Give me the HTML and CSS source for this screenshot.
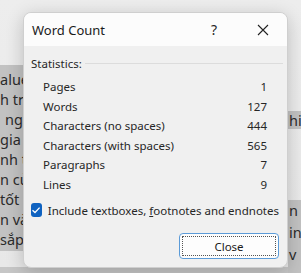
FILE: index.html
```html
<!DOCTYPE html>
<html lang="en">
<head>
  <meta charset="UTF-8" />
  <title>Word Count</title>
  <link rel="stylesheet" href="styles.css">
</head>
<body>
  <div class="doc">
    <div class="doc-left">
      <span class="ln">alue</span>
      <span class="ln">h tr</span>
      <span class="ln indent">ng</span>
      <span class="ln">gia</span>
      <span class="ln">nh t</span>
      <span class="ln">n củ</span>
      <span class="ln">tốt</span>
      <span class="ln">n và</span>
      <span class="ln">sắp</span>
    </div>
    <div class="doc-right">
      <span class="ln hi">hi</span>
      <span class="ln">n</span>
      <span class="ln">in</span>
      <span class="ln">v</span>
    </div>
  </div>

  <div class="dialog">
    <div class="titlebar">
      <span class="title">Word Count</span>
      <span class="help">?</span>
      <svg class="close-x" width="12" height="12" viewBox="0 0 12 12">
        <path d="M1 1 L11 11 M11 1 L1 11" stroke="#222" stroke-width="1.1" fill="none"/>
      </svg>
    </div>

    <div class="body">
      <div class="group">Statistics:</div>

      <div class="stats">
        <span>Pages</span><span class="num">1</span>
        <span>Words</span><span class="num">127</span>
        <span>Characters (no spaces)</span><span class="num">444</span>
        <span>Characters (with spaces)</span><span class="num">565</span>
        <span>Paragraphs</span><span class="num">7</span>
        <span>Lines</span><span class="num">9</span>
      </div>

      <label class="check">
        <span class="box">
          <svg width="10" height="10" viewBox="0 0 10 10">
            <path d="M1.5 5.2 L4 7.5 L8.6 2.6" stroke="#fff" stroke-width="1.3" fill="none"/>
          </svg>
        </span>
        <span>Include textboxes, <u>f</u>ootnotes and endnotes</span>
      </label>

      <div class="actions">
        <button class="close-btn"><span>Close</span></button>
      </div>
    </div>
  </div>
</body>
</html>
```

FILE: styles.css
```css
* {
  box-sizing: border-box;
}

body {
  margin: 0;
  width: 301px;
  height: 273px;
  overflow: hidden;
  position: relative;
  background: linear-gradient(#ededed, #e8e8e8 267px, #c6c6c6 267px);
  font-family: "Segoe UI", "Noto Sans", sans-serif;
  color: #262626;
}

/* document behind the dialog */
.doc {
  display: flex;
  justify-content: space-between;
  height: 100%;
  font-size: 14.5px;
  color: #2b2b2b;
}

.doc .ln {
  white-space: nowrap;
}

.doc-left {
  display: flex;
  flex-direction: column;
  width: 30px;
  height: 251px;
  padding-top: 69px;
  background: linear-gradient(transparent 65px, #c2c2c2 65px);
}

.doc-left .ln {
  height: 20px;
  line-height: 20px;
}

.doc-left .indent {
  padding-left: 5px;
}

.doc-right {
  display: flex;
  flex-direction: column;
  width: 13px;
  padding-top: 111px;
  padding-left: 1px;
  background: linear-gradient(transparent 111px, #c2c2c2 111px, #c2c2c2 129px,
    transparent 129px, transparent 200px, #c2c2c2 200px);
}

.doc-right .ln {
  height: 22px;
  line-height: 22px;
}

.doc-right .ln.hi {
  height: 18px;
  line-height: 18px;
  margin-bottom: 70px;
}

/* dialog */
.dialog {
  position: absolute;
  left: 23px;
  top: 12px;
  width: 265px;
  height: 256px;
  background: #f0f0f0;
  border: 1px solid #cfcfcf;
  border-radius: 8px;
  box-shadow: 0 4px 18px rgba(0, 0, 0, 0.2);
  overflow: hidden;
  font-size: 11.5px;
}

.titlebar {
  display: flex;
  align-items: center;
  height: 33px;
  background: #fcfcfc;
  padding-left: 8px;
}

.title {
  flex: 1;
  font-size: 13px;
  color: #1b1b1b;
}

.help {
  font-size: 14px;
  width: 20px;
  margin-right: 33px;
  text-align: center;
}

.close-x {
  margin-right: 18px;
}

.body {
  padding: 9px 8px 0 7px;
}

.group {
  display: flex;
  align-items: center;
  gap: 3px;
  height: 16px;
}

.group::after {
  content: "";
  flex: 1;
  border-top: 1px solid #dcdcdc;
  margin-right: -4px;
}

.stats {
  display: grid;
  grid-template-columns: 1fr auto;
  grid-auto-rows: 19.5px;
  align-items: center;
  margin-top: 6px;
  padding: 0 12px;
}

.num {
  text-align: right;
}

.check {
  display: flex;
  align-items: center;
  gap: 6px;
  height: 16px;
  margin-top: 8px;
  white-space: nowrap;
}

.box {
  display: flex;
  align-items: center;
  justify-content: center;
  width: 14px;
  height: 14px;
  background: #0f62c0;
  border-radius: 3px;
}

.actions {
  display: flex;
  justify-content: flex-end;
  margin-top: 15px;
}

.close-btn {
  width: 100px;
  height: 26px;
  padding: 2px;
  background: #fdfdfd;
  border: 1px solid #5b9bd8;
  border-radius: 4px;
  font-family: inherit;
  font-size: 11.5px;
  color: #1a1a1a;
}

.close-btn span {
  display: flex;
  align-items: center;
  justify-content: center;
  height: 100%;
  border: 1px dotted #555;
}
```
